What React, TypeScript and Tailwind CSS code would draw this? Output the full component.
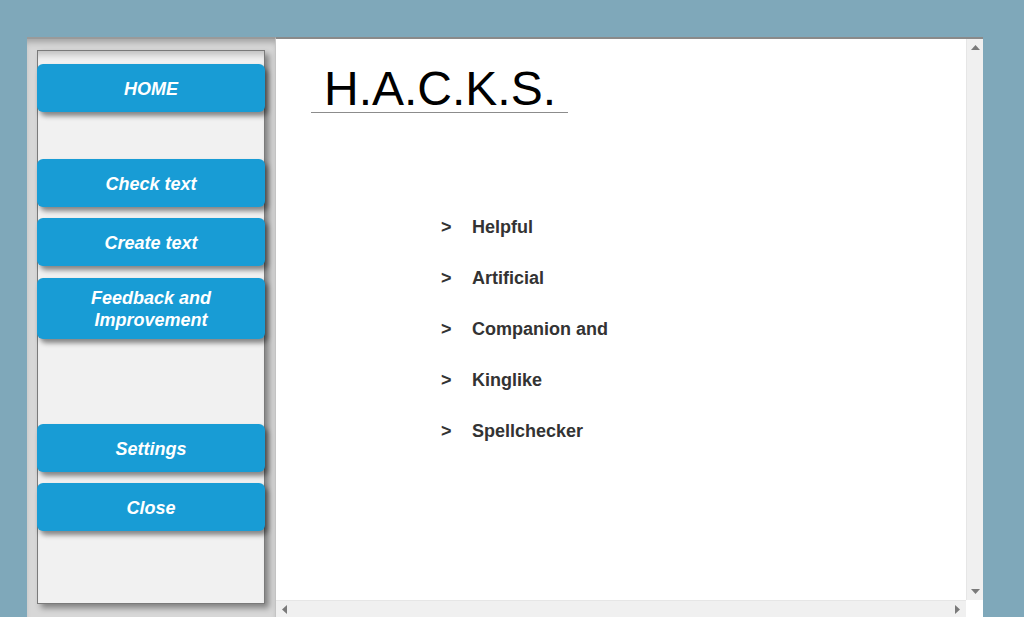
import React from "react";

const menuTop = ["HOME"];

function NavButton({ label, tall }: { label: string; tall?: boolean }) {
  return (
    <button
      className={`w-full ${tall ? "h-[61px]" : "h-[48px]"} rounded-[6px] bg-[#189cd5] text-white text-[18px] leading-[22px] font-bold italic shadow-[3px_4px_5px_rgba(0,0,0,0.45)] px-4 pt-px`}
    >
      {label}
    </button>
  );
}

export default function App() {
  const items = ["Helpful", "Artificial", "Companion and", "Kinglike", "Spellchecker"];

  return (
    <div className="w-[1024px] h-[617px] overflow-hidden bg-[#7fa8ba] pt-[37px] pl-[27px] font-['Liberation_Sans',Arial,sans-serif]">
      <div className="flex w-[956px] h-[580px]">
        {/* sidebar */}
        <div className="w-[249px] h-full bg-[#d7d7d7] border-t-2 border-[#9a9a9a] shadow-[inset_0_6px_6px_-3px_rgba(0,0,0,0.25)] pl-[10px] pt-[11px] border-r border-r-[#c4c4c4]">
          <div className="w-[228px] h-[554px] bg-[#f1f1f1] border border-[#7a7a7a] shadow-[4px_4px_6px_rgba(0,0,0,0.4),inset_0_8px_6px_-4px_rgba(0,0,0,0.2)] pt-[13px] flex flex-col">
            <div className="-mx-px">
              {menuTop.map((m) => (
                <NavButton key={m} label={m} />
              ))}
            </div>
            <div className="-mx-px mt-[47px] flex flex-col gap-[11px]">
              <NavButton label="Check text" />
              <NavButton label="Create text" />
              <div className="mt-px">
                <NavButton label="Feedback and Improvement" tall />
              </div>
            </div>
            <div className="-mx-px mt-[85px] flex flex-col gap-[11px]">
              <NavButton label="Settings" />
              <NavButton label="Close" />
            </div>
          </div>
        </div>

        {/* main content */}
        <div className="flex-1 flex flex-col border-t-2 border-[#8a8a8a]">
          <div className="flex flex-1 min-h-0">
            <div className="flex-1 bg-white">
              <div className="ml-[35px] mt-[26px] w-[257px] border-b border-[#8c8c8c] pl-[13px]">
                <div className="text-[48px] leading-[47px] text-black">H.A.C.K.S.</div>
              </div>
              <div className="mt-[89px] ml-[165px] flex flex-col">
                {items.map((t) => (
                  <div key={t} className="h-[51px] flex items-center text-[18px] font-bold text-[#333333]">
                    <span className="w-[31px]">&gt;</span>
                    <span>{t}</span>
                  </div>
                ))}
              </div>
            </div>
            {/* vertical scrollbar */}
            <div className="w-[17px] bg-[#f0f0f0] border-l border-[#e6e6e6] flex flex-col justify-between items-center py-[6px]">
              <svg width="9" height="5" viewBox="0 0 9 5">
                <polygon points="4.5,0 9,5 0,5" fill="#7a7a7a" />
              </svg>
              <svg width="9" height="5" viewBox="0 0 9 5">
                <polygon points="0,0 9,0 4.5,5" fill="#7a7a7a" />
              </svg>
            </div>
          </div>
          {/* horizontal scrollbar */}
          <div className="h-[17px] flex">
            <div className="flex-1 bg-[#f0f0f0] border-t border-[#e6e6e6] flex items-center justify-between px-[6px]">
              <svg width="5" height="9" viewBox="0 0 5 9">
                <polygon points="5,0 5,9 0,4.5" fill="#7a7a7a" />
              </svg>
              <svg width="5" height="9" viewBox="0 0 5 9">
                <polygon points="0,0 5,4.5 0,9" fill="#7a7a7a" />
              </svg>
            </div>
            <div className="w-[17px] bg-white" />
          </div>
        </div>
      </div>
    </div>
  );
}
